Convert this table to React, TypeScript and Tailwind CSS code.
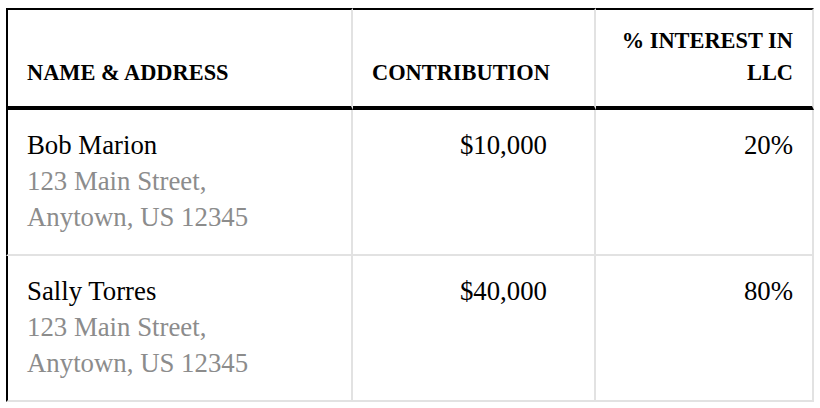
const members = [
  { name: 'Bob Marion', street: '123 Main Street,', city: 'Anytown, US 12345', contribution: '$10,000', interest: '20%' },
  { name: 'Sally Torres', street: '123 Main Street,', city: 'Anytown, US 12345', contribution: '$40,000', interest: '80%' },
];

export default function App() {
  return (
    <div className="bg-white w-[820px] h-[408px] pt-[8px] pl-[6px]" style={{ fontFamily: '"Liberation Serif", "Times New Roman", serif' }}>
      <table className="table-fixed border-separate border-spacing-0 w-[808px] text-black">
        <colgroup>
          <col className="w-[347px]" />
          <col className="w-[243px]" />
          <col className="w-[218px]" />
        </colgroup>
        <thead>
          <tr>
            <th className="align-bottom text-left font-bold uppercase text-[22.4px] leading-[32px] pt-[15px] pb-[17px] px-[19px] border-t-2 border-t-black border-b-4 border-b-black border-l-2 border-l-black border-r-2 border-r-[#e2e2e2]">
              Name &amp; Address
            </th>
            <th className="align-bottom text-right font-bold uppercase text-[22.4px] leading-[32px] pt-[15px] pb-[17px] pl-[19px] pr-[47px] border-t-2 border-t-black border-b-4 border-b-black border-r-2 border-r-[#e2e2e2]">
              Contribution
            </th>
            <th className="align-bottom text-right font-bold uppercase text-[22.4px] leading-[32px] pt-[15px] pb-[17px] px-[19px] border-t-2 border-t-black border-b-4 border-b-black border-r-2 border-r-[#e2e2e2]">
              % Interest in LLC
            </th>
          </tr>
        </thead>
        <tbody>
          {members.map((m) => (
            <tr key={m.name}>
              <td className="align-top text-left text-[26.8px] leading-[36px] pt-[17px] pb-[19px] px-[19px] border-l-2 border-l-black border-r-2 border-r-[#e2e2e2] border-b-2 border-b-[#e2e2e2]">
                <div>{m.name}</div>
                <div className="text-[#8c8c8c]">{m.street}</div>
                <div className="text-[#8c8c8c]">{m.city}</div>
              </td>
              <td className="align-top text-right text-[26.8px] leading-[36px] pt-[17px] pb-[19px] pl-[19px] pr-[47px] border-r-2 border-r-[#e2e2e2] border-b-2 border-b-[#e2e2e2]">
                {m.contribution}
              </td>
              <td className="align-top text-right text-[26.8px] leading-[36px] pt-[17px] pb-[19px] px-[19px] border-r-2 border-r-[#e2e2e2] border-b-2 border-b-[#e2e2e2]">
                {m.interest}
              </td>
            </tr>
          ))}
        </tbody>
      </table>
    </div>
  );
}
